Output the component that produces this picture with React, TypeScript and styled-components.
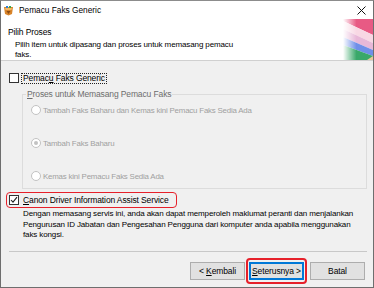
import styled, { createGlobalStyle } from 'styled-components';

const GlobalStyle = createGlobalStyle`
  html, body {
    margin: 0;
    padding: 0;
    background: #ffffff;
  }
  body {
    font-family: 'Liberation Sans', 'Noto Sans', sans-serif;
    font-size: 8.5px;
    letter-spacing: -0.12px;
  }
`;

const Window = styled.div`
  width: 374px;
  height: 288px;
  box-sizing: border-box;
  border: 1px solid #6e6e6e;
  border-top-color: #8c8c8c;
  background: #f0f0f0;
  display: flex;
  flex-direction: column;
  overflow: hidden;
`;

const TitleBar = styled.div`
  height: 18px;
  background: #ffffff;
  display: flex;
  align-items: center;
  padding: 0 7px 0 2px;
  gap: 5px;
`;

const TitleText = styled.span`
  font-size: 8.3px;
  letter-spacing: 0;
  color: #000;
  flex: 1;
`;

const Header = styled.div`
  height: 42px;
  box-sizing: border-box;
  background: #ffffff;
  border-bottom: 1px solid #d0d0d0;
  display: flex;
`;

const HeaderTexts = styled.div`
  flex: 1;
  padding: 8px 0 0 7px;
`;

const HeaderTitle = styled.div`
  color: #000;
  line-height: 11px;
`;

const HeaderSub = styled.div`
  color: #000;
  font-size: 8px;
  line-height: 10px;
  margin: 2px 0 0 7px;
  white-space: nowrap;
`;

const HeaderArt = styled.svg`
  width: 30px;
  height: 41px;
`;

const Body = styled.div`
  flex: 1;
  display: flex;
  flex-direction: column;
  padding: 11px 7px 0 7px;
`;

const CheckRow = styled.div`
  display: flex;
  align-items: center;
  gap: 2px;
  height: 12px;
`;

const Box = styled.span`
  width: 8px;
  height: 8px;
  border: 1px solid #333;
  background: #fff;
  display: inline-flex;
  align-items: center;
  justify-content: center;
  flex-shrink: 0;
  margin-left: 1px;
`;

const CheckLabel = styled.span<{ $focus?: boolean }>`
  color: #000;
  line-height: 9px;
  padding: 0 1px;
  white-space: nowrap;
  border: 1px ${({ $focus }) => ($focus ? 'dotted #222' : 'solid transparent')};
`;

const Group = styled.fieldset`
  margin: 5px 0 0 14px;
  width: 345px;
  height: 100px;
  box-sizing: border-box;
  border: 1px solid #dcdcdc;
  padding: 4px 0 0 8px;
  display: flex;
  flex-direction: column;
  gap: 21px;
`;

const Legend = styled.legend`
  color: #6d6d6d;
  padding: 0 1px;
  margin-left: -5px;
  line-height: 11px;
`;

const RadioRow = styled.div`
  display: flex;
  align-items: center;
  gap: 2px;
  height: 12px;
`;

const RadioDot = styled.span<{ $on?: boolean }>`
  width: 8px;
  height: 8px;
  border-radius: 50%;
  border: 1px solid #c2c2c2;
  background: #fff;
  display: inline-flex;
  align-items: center;
  justify-content: center;
  &::after {
    content: '';
    display: ${({ $on }) => ($on ? 'block' : 'none')};
    width: 4px;
    height: 4px;
    border-radius: 50%;
    background: #c2c2c2;
  }
`;

const RadioLabel = styled.span`
  color: #a0a0a0;
  font-size: 7.9px;
  letter-spacing: -0.2px;
  white-space: nowrap;
`;

const Highlight = styled.div`
  margin: 3px 0 0 -2px;
  width: 171px;
  height: 16px;
  box-sizing: border-box;
  border: 1.5px solid #e6202a;
  border-radius: 4px;
  display: flex;
  align-items: center;
  padding-left: 1px;
`;

const Desc = styled.div`
  color: #000;
  font-size: 8px;
  line-height: 10.5px;
  margin: 1px 0 0 15px;
  white-space: nowrap;
`;

const Separator = styled.div`
  height: 1px;
  background: #c8c8c8;
  margin: 10px 0 0 1px;
  width: 358px;
`;

const ButtonBar = styled.div`
  display: flex;
  justify-content: flex-end;
  align-items: center;
  padding-right: 1px;
  margin-top: 6px;
`;

const Btn = styled.button<{ $primary?: boolean }>`
  width: 55px;
  height: 18px;
  box-sizing: border-box;
  font-family: inherit;
  font-size: inherit;
  letter-spacing: inherit;
  white-space: pre;
  color: #000;
  background: #e1e1e1;
  border: ${({ $primary }) => ($primary ? '2px solid #0078d7' : '1px solid #adadad')};
  padding: 0;
  display: flex;
  align-items: center;
  justify-content: center;
`;

const RedRing = styled.div`
  border: 2px solid #e6202a;
  border-radius: 4px;
  padding: 2px 1px;
  margin: 0 3px 0 1px;
  display: flex;
`;

const U = styled.span`
  text-decoration: underline;
`;

const AppIcon = () => (
  <svg width="11" height="11" viewBox="0 0 11 11">
    <path d="M1 2 L10 2 L9 9 L5.5 10.5 L2 9 Z" fill="#d8842a" />
    <path d="M2 3 L9 3 L8.5 5 L2.5 5 Z" fill="#f2b866" />
    <rect x="3" y="1" width="2" height="2" fill="#2e7fd8" />
    <rect x="6" y="1" width="2" height="2" fill="#3aa84a" />
    <path d="M3.5 6 L7.5 6 L5.5 9 Z" fill="#8a4a12" />
  </svg>
);

const CloseIcon = () => (
  <svg width="9" height="9" viewBox="0 0 9 9">
    <path d="M0.5 0.5 L8.5 8.5 M8.5 0.5 L0.5 8.5" stroke="#111" strokeWidth="1" />
  </svg>
);

const Check = () => (
  <svg width="8" height="8" viewBox="0 0 8 8">
    <path d="M1 4 L3 6.2 L7 1.2" stroke="#222" strokeWidth="1.1" fill="none" />
  </svg>
);

export default function App() {
  return (
    <>
      <GlobalStyle />
      <Window>
        <TitleBar>
          <AppIcon />
          <TitleText>Pemacu Faks Generic</TitleText>
          <CloseIcon />
        </TitleBar>
        <Header>
          <HeaderTexts>
            <HeaderTitle>Pilih Proses</HeaderTitle>
            <HeaderSub>
              Pilih item untuk dipasang dan proses untuk memasang pemacu
              <br />
              faks.
            </HeaderSub>
          </HeaderTexts>
          <HeaderArt viewBox="0 0 30 41" preserveAspectRatio="none">
            <defs>
              <linearGradient id="fade" x1="0" y1="0" x2="1" y2="0">
                <stop offset="0" stopColor="#fff" stopOpacity="1" />
                <stop offset="0.45" stopColor="#fff" stopOpacity="0" />
              </linearGradient>
            </defs>
            <polygon points="0,0 30,0 30,16 0,2" fill="#e85a84" />
            <polygon points="0,2 30,16 30,24 0,10" fill="#f8d8e4" />
            <polygon points="0,10 30,24 30,31 0,18" fill="#e8b8d8" />
            <polygon points="0,18 30,31 30,37 0,26" fill="#6f8fe8" />
            <polygon points="0,26 30,37 30,41 0,41" fill="#3aa86a" />
            <polygon points="24,41 30,37 30,41" fill="#e8c89a" />
            <rect x="0" y="0" width="30" height="41" fill="url(#fade)" />
          </HeaderArt>
        </Header>
        <Body>
          <CheckRow>
            <Box />
            <CheckLabel $focus>
              Pemac<U>u</U> Faks Generic
            </CheckLabel>
          </CheckRow>
          <Group>
            <Legend>
              <U>P</U>roses untuk Memasang Pemacu Faks
            </Legend>
            <RadioRow>
              <RadioDot />
              <RadioLabel>Tambah Faks Baharu dan Kemas kini Pemacu Faks Sedia Ada</RadioLabel>
            </RadioRow>
            <RadioRow>
              <RadioDot $on />
              <RadioLabel>Tambah Faks Baharu</RadioLabel>
            </RadioRow>
            <RadioRow>
              <RadioDot />
              <RadioLabel>Kemas kini Pemacu Faks Sedia Ada</RadioLabel>
            </RadioRow>
          </Group>
          <Highlight>
            <CheckRow>
              <Box>
                <Check />
              </Box>
              <CheckLabel>
                <U>C</U>anon Driver Information Assist Service
              </CheckLabel>
            </CheckRow>
          </Highlight>
          <Desc>
            Dengan memasang servis ini, anda akan dapat memperoleh maklumat peranti dan menjalankan
            <br />
            Pengurusan ID Jabatan dan Pengesahan Pengguna dari komputer anda apabila menggunakan
            <br />
            faks kongsi.
          </Desc>
          <Separator />
          <ButtonBar>
            <Btn>
              {'< '}
              <U>K</U>embali
            </Btn>
            <RedRing>
              <Btn $primary>
                <U>S</U>
                {'eterusnya >'}
              </Btn>
            </RedRing>
            <Btn>Batal</Btn>
          </ButtonBar>
        </Body>
      </Window>
    </>
  );
}
